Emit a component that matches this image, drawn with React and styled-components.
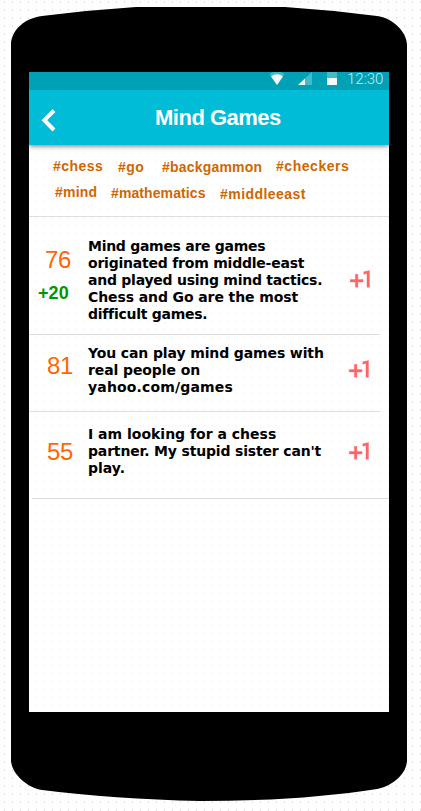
import React from "react";
import styled, { createGlobalStyle } from "styled-components";

const Global = createGlobalStyle`
  body { margin: 0; background: #fff; overflow: hidden; }
  * { box-sizing: border-box; }
`;
const Page = styled.div`
  width: 421px; height: 811px; padding: 7px 14px 10px 11px; overflow: hidden;
  background: conic-gradient(from 270deg at 1px 2px, #e2e2e2 90deg, transparent 0) 4px 1px / 8px 8px #fff;
`;
const Phone = styled.div`
  width: 396px; height: 794px; padding: 65px 18px 82px; background: #000;
  clip-path: path("M0 38 C0 23 14 11 31 9 Q78 3 125 0 H274 Q320 3 366 9 C382 11 396 25 396 38 V753 C396 768 379 780 366 782 Q290 794 189 794 Q102 792 31 783 C16 781 0 766 0 753 Z");
`;
const Screen = styled.main`
  height: 640px; display: flex; flex-direction: column; overflow: hidden;
  background: conic-gradient(from 270deg at 1px 2px, #f3f3f3 90deg, transparent 0) 7px 1px / 8px 8px #fff;
`;
const StatusBar = styled.div`
  height: 18px; flex: none; background: #00a0b5; display: flex; justify-content: flex-end;
  position: relative; z-index: 1;
  svg { display: block; flex: none; }
`;
const Clock = styled.time`
  width: 38px; margin: 0 4px 0 8px; font: 300 15px/15px Roboto, sans-serif; color: #c9edf2;
  letter-spacing: 0; white-space: nowrap;
`;
const Header = styled.header`
  height: 55px; flex: none; background: #00bcd7; display: flex; align-items: center;
  box-shadow: 0 1px 5px rgba(0,0,0,.55);
`;
const Back = styled.button`
  width: 16px; height: 24px; margin: 5px 0 0 12px; padding: 0; border: 0; background: none;
  svg { display: block; }
`;
const Title = styled.h1`
  margin: 0 0 0 98px; font: bold 22px/26px "Liberation Sans", Arial, sans-serif; color: #fff;
  letter-spacing: -.5px; white-space: nowrap;
`;
const Tags = styled.nav`
  height: 72px; flex: none; border-bottom: 1px solid #ddd; padding-top: 12px;
`;
const TagRow = styled.div`
  display: flex; height: 27px;
`;
const Tag = styled.a`
  width: ${p => p.$w}px; height: 20px; margin: ${p => p.$top}px 0 0 ${p => p.$gap}px; color: #cf6700;
  font: bold 14px/18px "Liberation Sans", Arial, sans-serif; letter-spacing: ${p => p.$ls}px; white-space: nowrap;
`;
const Row = styled.article`
  height: ${p => p.$h}px; flex: none; display: flex; border-bottom: 1px solid #ddd;
  margin: 0 ${p => p.$mr}px 0 ${p => p.$ml}px; padding-left: ${p => 9 - p.$ml}px;
`;
const Scores = styled.div`
  width: 50px; flex: none; padding-top: ${p => p.$top}px;
`;
const Score = styled.div`
  padding-left: ${p => p.$x}px; color: #ff6600; font: 24px/28px "Liberation Sans", Arial, sans-serif; letter-spacing: -.4px;
`;
const Gain = styled.div`
  margin-top: 5px; color: #009600; font: bold 18px/28px "Liberation Sans", Arial, sans-serif; letter-spacing: .1px;
`;
const Message = styled.div`
  width: 250px; flex: none; padding-top: ${p => p.$top}px;
`;
const Line = styled.div`
  font: bold 14px/17px "DejaVu Sans", Verdana, sans-serif; color: #000; white-space: nowrap; letter-spacing: ${p => p.$ls}px;
`;
const Vote = styled.button`
  flex: none; height: 32px; width: 32px; margin: ${p => p.$top}px 0 0 ${p => p.$x}px; padding: 0; border: 0; background: none;
  svg { display: block; }
`;

const PlusOne = () => (
  <svg width="31" height="31" viewBox="0 0 24 24" fill="#ff6565" stroke="#ff6565" strokeWidth=".25">
    <path d="M10 8H8v4H4v2h4v4h2v-4h4v-2h-4zm4.5-1.92V7.9l2.5-.5V18h2V5z" />
  </svg>
);
const StatusIcons = () => (
  <svg width="70" height="18" viewBox="269 72 70 18">
    <path d="M269.5 74Q277 69 284.5 74L277 85Z" fill="#45bac9" />
    <path d="M271 76.5Q277 72 283 76.5L277 85Z" fill="#f2fbfc" />
    <path d="M312 72V85H298Z" fill="#45bac9" />
    <path d="M305 78.5V85H298Z" fill="#f2fbfc" />
    <path d="M327 72h10v6h-10z" fill="#45bac9" />
    <path d="M327 78h10v7h-10z" fill="#f2fbfc" />
  </svg>
);

const tags = [
  [["#chess", 51, 24, 0, 0.45], ["#go", 28, 14, 1, 0.4], ["#backgammon", 102, 16, 1, 0.2], ["#checkers", 76, 12, 0, 0.55]],
  [["#mind", 44, 26, -1, 0.2], ["#mathematics", 95, 12, 0, 0.1], ["#middleeast", 88, 14, 1, 0.45]],
];
const posts = [
  { h: 118, ml: 0, mr: 9, score: "76", sx: 7, st: 29, gain: "+20", mt: 21, vx: 7, vt: 46,
    lines: [["Mind games are games", -0.28], ["originated from middle-east", -0.22], ["and played using mind tactics.", -0.25], ["Chess and Go are the most", -0.1], ["difficult games.", -0.27]] },
  { h: 77, ml: 0, mr: 9, score: "81", sx: 9, st: 17, mt: 10, vx: 6, vt: 18,
    lines: [["You can play mind games with", -0.12], ["real people on", -0.1], ["yahoo.com/games", 0.16]] },
  { h: 87, ml: 3, mr: 0, score: "55", sx: 9, st: 26, mt: 14, vx: 6, vt: 23,
    lines: [["I am looking for a chess", 0], ["partner. My stupid sister can't", -0.17], ["play.", 0]] },
];

export default function App() {
  return (
    <Page>
      <Global />
      <Phone>
        <Screen>
          <StatusBar><StatusIcons /><Clock>12:30</Clock></StatusBar>
          <Header>
            <Back aria-label="Back">
              <svg width="16" height="24" viewBox="0 0 16 24" fill="none" stroke="#fff" strokeWidth="4">
                <path d="M13 2.5L3.4 12.2L13 22" />
              </svg>
            </Back>
            <Title>Mind Games</Title>
          </Header>
          <Tags>
            {tags.map((r, i) => (
              <TagRow key={i}>
                {r.map(([t, w, g, top, ls]) => <Tag key={t} $w={w} $gap={g} $top={top} $ls={ls}>{t}</Tag>)}
              </TagRow>
            ))}
          </Tags>
          {posts.map(p => (
            <Row key={p.score} $h={p.h} $ml={p.ml} $mr={p.mr}>
              <Scores $top={p.st}>
                <Score $x={p.sx}>{p.score}</Score>
                {p.gain && <Gain>{p.gain}</Gain>}
              </Scores>
              <Message $top={p.mt}>{p.lines.map(([l, ls]) => <Line key={l} $ls={ls}>{l}</Line>)}</Message>
              <Vote $x={p.vx} $top={p.vt} aria-label="Plus one"><PlusOne /></Vote>
            </Row>
          ))}
        </Screen>
      </Phone>
    </Page>
  );
}
